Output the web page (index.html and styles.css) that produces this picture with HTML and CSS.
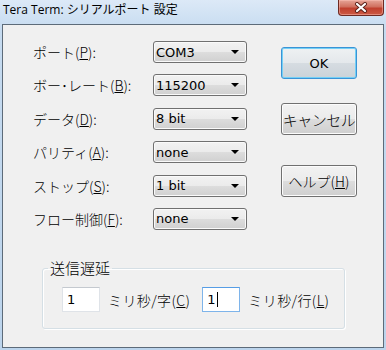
FILE: index.html
```html
<!DOCTYPE html>
<html lang="ja">
<head>
    <meta charset="UTF-8">
    <title>Tera Term: シリアルポート 設定</title>
    <link rel="stylesheet" href="styles.css">
</head>
<body>

<div class="window">
    <div class="titlebar">
        <span class="title">Tera Term: シリアルポート 設定</span>
        <div class="close">
            <svg width="14" height="11" viewBox="0 0 14 11">
                <path d="M3 2 L11 9 M11 2 L3 9" stroke="#5a2018" stroke-width="4" stroke-linecap="round"/>
                <path d="M3 2 L11 9 M11 2 L3 9" stroke="#ffffff" stroke-width="2.2" stroke-linecap="round"/>
            </svg>
        </div>
    </div>

    <div class="client">
        <div class="main">
            <div class="fields">
                <div class="row">
                    <label>ポート(<u>P</u>):</label>
                    <div class="combo"><span>COM3</span></div>
                </div>
                <div class="row">
                    <label>ボー･レート(<u>B</u>):</label>
                    <div class="combo"><span>115200</span></div>
                </div>
                <div class="row">
                    <label>データ(<u>D</u>):</label>
                    <div class="combo"><span>8 bit</span></div>
                </div>
                <div class="row">
                    <label>パリティ(<u>A</u>):</label>
                    <div class="combo"><span>none</span></div>
                </div>
                <div class="row">
                    <label>ストップ(<u>S</u>):</label>
                    <div class="combo"><span>1 bit</span></div>
                </div>
                <div class="row">
                    <label>フロー制御(<u>F</u>):</label>
                    <div class="combo"><span>none</span></div>
                </div>
            </div>

            <div class="buttons">
                <button class="btn btn-ok">OK</button>
                <button class="btn btn-cancel">キャンセル</button>
                <button class="btn btn-help">ヘルプ(<u>H</u>)</button>
            </div>
        </div>

        <fieldset class="group">
            <legend>送信遅延</legend>
            <div class="delay">
                <div class="textbox">1</div>
                <span class="unit">ミリ秒/字(<u>C</u>)</span>
                <div class="textbox focused">1<span class="caret"></span></div>
                <span class="unit">ミリ秒/行(<u>L</u>)</span>
            </div>
        </fieldset>
    </div>
</div>

</body>
</html>
```

FILE: styles.css
```css
body {
    margin: 0;
    font-family: "Noto Sans CJK JP", sans-serif;
    background-color: #c3d9ef;
}
.window {
    width: 386px;
    height: 350px;
    box-sizing: border-box;
    padding: 0 2px 2px 2px;
    display: flex;
    flex-direction: column;
    background: linear-gradient(#dce9f7, #c6dbf0 30px, #bcd4ec);
}
.titlebar {
    height: 24px;
    flex-shrink: 0;
    display: flex;
    align-items: flex-start;
}
.title {
    font-family: "Open Sans", "Noto Sans CJK JP", sans-serif;
    font-size: 12px;
    line-height: 20px;
    padding-left: 1px;
    color: #000;
}
.close {
    margin-left: auto;
    width: 44px;
    height: 15px;
    border: 1px solid #6e2a22;
    border-top: none;
    border-radius: 0 0 4px 4px;
    background: linear-gradient(#e6a597, #d0705f 45%, #c0402e 55%, #cc5a44);
    box-shadow: inset 0 0 0 1px rgba(255, 200, 190, 0.45);
    display: flex;
    justify-content: center;
    align-items: center;
}
.client {
    flex: 1;
    min-height: 0;
    border: 1px solid #5d6b79;
    background-color: #f0f0f0;
}
.main {
    display: flex;
    height: 234px;
}
.fields {
    padding: 16px 0 0 30px;
    display: grid;
    grid-auto-rows: 33.4px;
    align-content: start;
}
.row {
    display: flex;
    align-items: flex-start;
}
.row label {
    width: 120px;
    font-size: 14px;
    font-weight: 300;
    line-height: 22px;
    color: #000;
}
.combo {
    width: 94px;
    height: 22px;
    box-sizing: border-box;
    border: 1px solid #707070;
    border-radius: 3px;
    background: linear-gradient(#f2f2f2, #ebebeb 50%, #dddddd 50%, #d0d0d0);
    box-shadow: inset 0 0 0 1px #fafafa;
    display: flex;
    align-items: center;
    padding: 0 7px 0 2px;
    font-family: "DejaVu Sans", sans-serif;
    font-size: 13px;
    color: #000;
}
.combo::after {
    content: "";
    margin-left: auto;
    border-left: 4px solid transparent;
    border-right: 4px solid transparent;
    border-top: 4px solid #000;
}
.buttons {
    margin-left: 34px;
    padding-top: 22px;
    display: flex;
    flex-direction: column;
}
.btn {
    width: 76px;
    height: 32px;
    padding: 0;
    border: 1px solid #707070;
    border-radius: 3px;
    background: linear-gradient(#f2f2f2, #ebebeb 50%, #dddddd 50%, #cfcfcf);
    box-shadow: inset 0 0 0 1px #fcfcfc;
    font-family: "Noto Sans CJK JP", sans-serif;
    font-size: 14px;
    font-weight: 300;
    color: #000;
}
.btn-ok {
    border-color: #3a93d6;
    box-shadow: inset 0 0 0 1px #74d0f5;
    background: linear-gradient(#eef1f3, #e4e8eb 50%, #d6dce1 50%, #cbd3d9);
    font-family: "DejaVu Sans", sans-serif;
    font-weight: normal;
    font-size: 13px;
}
.btn-cancel {
    margin-top: 24px;
    font-size: 15px;
    letter-spacing: -0.5px;
}
.btn-help {
    margin-top: 30px;
}
.group {
    margin: 0 0 0 39px;
    width: 303px;
    box-sizing: border-box;
    padding: 0 0 16px 19px;
    border: 1px solid #d5dfe5;
    border-radius: 3px;
    box-shadow: inset 1px 1px 0 #fff, 1px 1px 0 #fff;
}
.group legend {
    padding: 0 2px;
    margin-left: -14px;
    font-size: 15px;
    font-weight: 300;
    line-height: 18px;
    color: #000;
}
.delay {
    margin-top: 10px;
    display: flex;
    align-items: center;
}
.textbox {
    width: 38px;
    height: 25px;
    box-sizing: border-box;
    border: 1px solid #dfe3e8;
    border-top-color: #c4c9cf;
    background-color: #fff;
    padding-left: 4px;
    font-family: "DejaVu Sans", sans-serif;
    font-size: 13px;
    line-height: 23px;
    display: flex;
    align-items: center;
}
.textbox.focused {
    border-color: #7eb4ea;
    border-top-color: #569de5;
}
.caret {
    width: 1px;
    height: 15px;
    background-color: #000;
    margin-left: 1px;
}
.unit {
    font-size: 14px;
    font-weight: 300;
    margin: 0 12px 0 8px;
    letter-spacing: 0.4px;
}
```
